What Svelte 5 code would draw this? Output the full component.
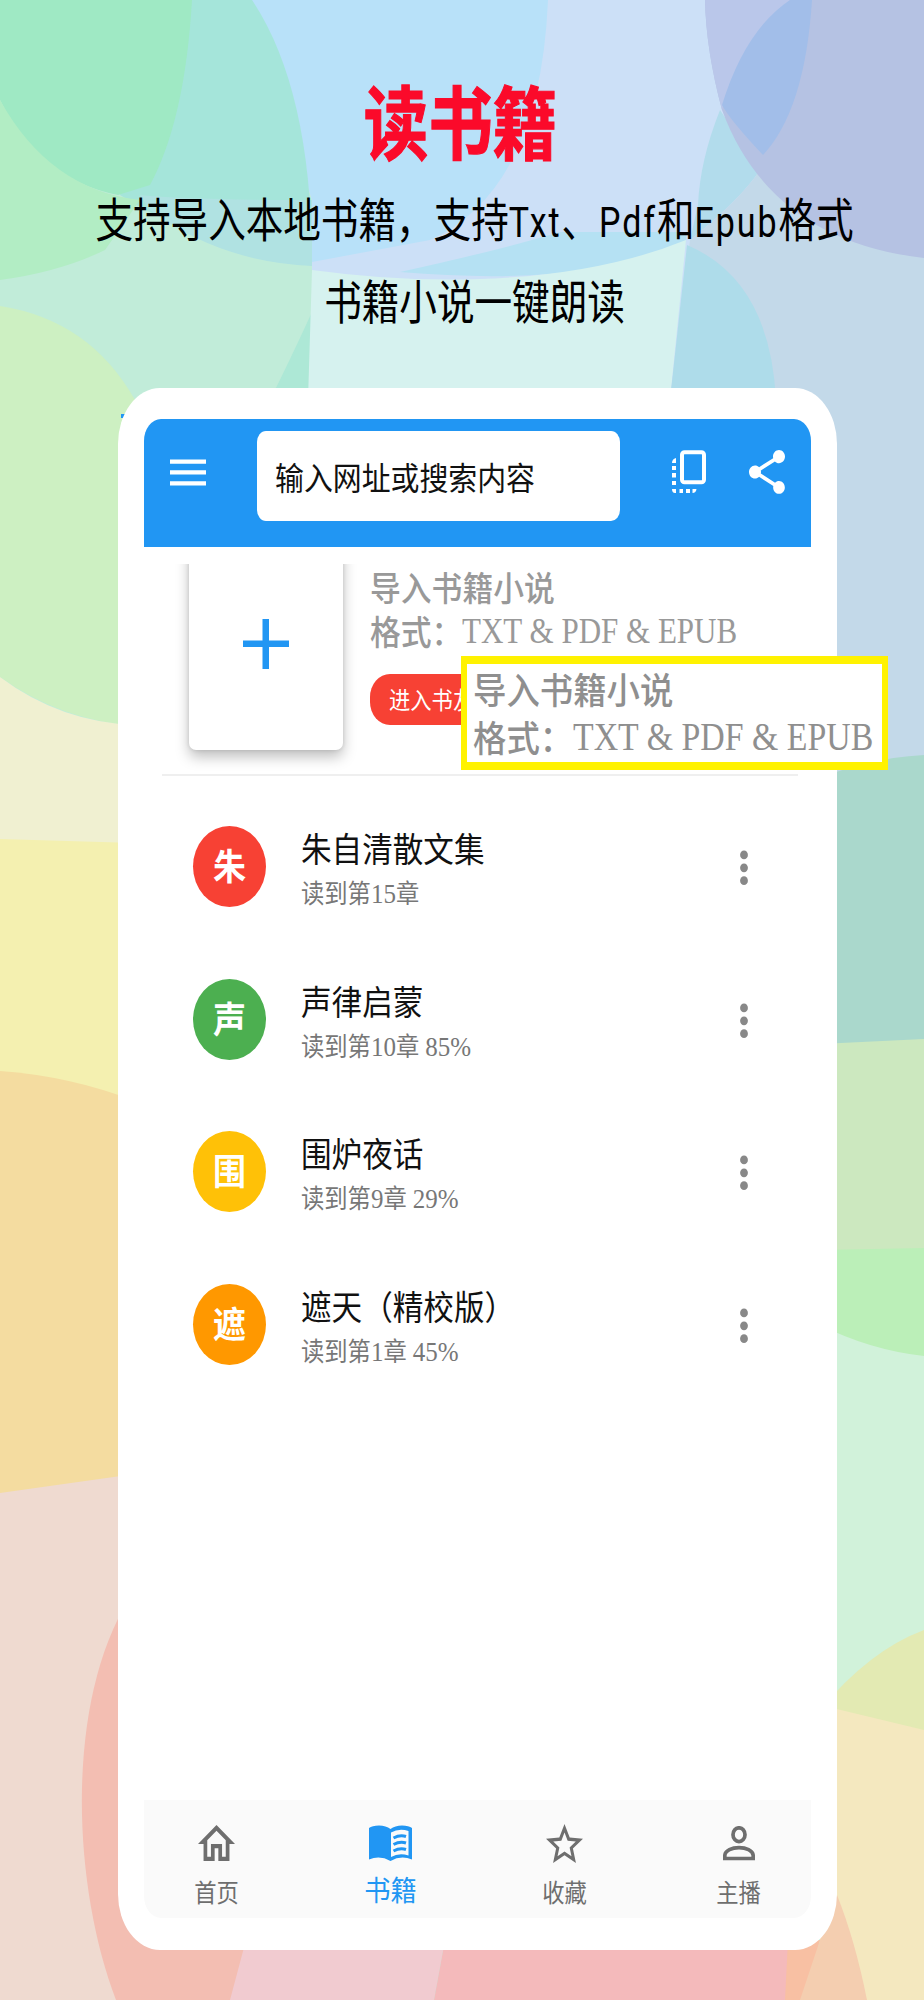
<script>
	let books = [
		{ initial: '朱', title: '朱自清散文集', chapter: '15', progress: '', color: '#f74134' },
		{ initial: '声', title: '声律启蒙', chapter: '10', progress: '85%', color: '#4caf50' },
		{ initial: '围', title: '围炉夜话', chapter: '9', progress: '29%', color: '#ffc107' },
		{ initial: '遮', title: '遮天（精校版）', chapter: '1', progress: '45%', color: '#ff9800' }
	];
	let tabs = [
		{ id: 'home', label: '首页' },
		{ id: 'books', label: '书籍' },
		{ id: 'star', label: '收藏' },
		{ id: 'host', label: '主播' }
	];
	let current = 'books';
</script>

<div class="poster">
	<svg class="backdrop" width="924" height="2000" viewBox="0 0 924 2000" aria-hidden="true">
		<rect width="924" height="2000" fill="#c1ecd9" />
		<!-- top -->
		<path d="M250 0H924V400H312V200Z" fill="#cce0f7" />
		<path d="M250 0H548Q540 190 430 240L312 262V200Z" fill="#b8e1f9" />
		<path d="M190 0H252Q312 90 312 265Q190 240 120 195Z" fill="#a5e5da" />
		<path d="M0 0H192Q185 120 150 185L118 195Q40 180 0 100Z" fill="#9fe9c4" />
		<path d="M0 100Q50 190 140 200L105 250Q60 272 0 280Z" fill="#b2edc4" />
		<path d="M312 312Q290 360 270 400H312Z" fill="#ade8d6" />
		<path d="M400 272Q500 250 560 232H686V242Q590 288 400 272Z" fill="#b5e1f3" />
		<path d="M312 270Q400 282 480 279Q600 275 686 240L670 400H308Z" fill="#d6f2ef" />
		<path d="M140 195Q190 200 312 200V266Q220 262 150 210Z" fill="#b0e2e2" />
		<path d="M720 110Q700 160 698 205L690 240Q740 200 760 170Z" fill="#b2dcec" />
		<path d="M690 240Q740 200 760 170L924 150V780H780L700 400H670Z" fill="#c3d9e9" />
		<path d="M687 245Q770 280 776 400H670Z" fill="#aedcea" />
		<path d="M705 0H924V258Q770 240 722 110Q706 50 705 0Z" fill="#b5c2e3" />
		<path d="M705 0H790Q735 50 722 110Q706 50 705 0Z" fill="#bac7ea" />
		<path d="M790 0H812Q805 110 763 155Q730 120 722 105Q745 30 790 0Z" fill="#a2bee9" />
		<!-- left side -->
		<path d="M0 306Q90 320 135 400V726Q60 720 0 677Z" fill="#cdf0c2" />
		<path d="M0 677Q60 722 135 725V845H0Z" fill="#f0f0d1" />
		<path d="M0 839L135 843V1102H0Z" fill="#f4f0b0" />
		<path d="M0 1071Q70 1076 135 1101V1480L0 1498Z" fill="#f4dca0" />
		<path d="M0 1493L135 1474V2000H0Z" fill="#efdad0" />
		<path d="M135 1590C65 1690 70 1880 116 2000H260V1800Z" fill="#f3beb2" />
		<!-- right side -->
		<path d="M820 778Q870 758 924 755V1050H820Z" fill="#aad8cc" />
		<path d="M820 1044L924 1039V1260H820Z" fill="#cce8bf" />
		<path d="M820 1250L924 1248V1365H820Z" fill="#bbefb8" />
		<path d="M820 1325Q870 1350 924 1356V1740H820Z" fill="#d1f2da" />
		<path d="M820 1710Q870 1650 924 1630V1740H820Z" fill="#e3eab3" />
		<path d="M820 1705L924 1730V2000H820Z" fill="#f4e8bf" />
		<!-- bottom edge -->
		<path d="M246 1940H445L434 2000H230Z" fill="#f1cbd0" />
		<path d="M445 1940H790V2000H434Z" fill="#f4babb" />
		<path d="M788 1940H820L805 2000H785Z" fill="#f8c0a3" />
		<path d="M837 1895Q855 1940 867 2000H800L820 1940Z" fill="#f4ceb0" />
		<path d="M121 414h4v4h-4z" fill="#2196f3" />
	</svg>

	<header class="intro">
		<h1 class="tall">读书籍</h1>
		<p class="tall">支持导入本地书籍，支持<span class="latin">Txt</span>、<span class="latin">Pdf</span>和<span class="latin">Epub</span>格式</p>
		<p class="tall second">书籍小说一键朗读</p>
	</header>

	<main class="phone">
		<div class="screen">
			<div class="toolbar">
				<svg class="menu" width="36" height="27" viewBox="0 0 36 27">
					<path d="M0 .5H36V4.700H0ZM0 11.300H36V15.500H0ZM0 22.200H36V26.400H0Z" fill="#fff" />
				</svg>
				<div class="search"><span class="t">输入网址或搜索内容</span></div>
				<svg class="front" width="34" height="44" viewBox="0 0 34 44">
					<rect x="10" y="2.2" width="22" height="30" rx="2.5" fill="none" stroke="#fff" stroke-width="4" />
					<path d="M4 8V13H0Q0 9 4 8ZM0 16H4V20H0ZM0 23H4V27.500H0ZM0 31H4V35H0ZM0 39H4V43H3Q0 43 0 39ZM7.500 39H11V43H7.500ZM14 39H18V43H14ZM20.500 39H24.500Q24 43 20.500 43Z" fill="#fff" />
				</svg>
				<svg class="share" width="36" height="44" viewBox="3 2 18 20" preserveAspectRatio="none">
					<path fill="#fff" d="M18 16.080c-.76 0-1.440.3-1.960.77L8.910 12.700c.05-.23.09-.46.09-.7s-.04-.47-.09-.7l7.050-4.110c.54.5 1.250.81 2.040.81 1.660 0 3-1.340 3-3s-1.340-3-3-3-3 1.340-3 3c0 .24.04.47.09.7L8.040 9.810C7.500 9.310 6.790 9 6 9c-1.660 0-3 1.340-3 3s1.340 3 3 3c.79 0 1.500-.31 2.040-.81l7.120 4.160c-.05.21-.08.43-.08.65 0 1.610 1.310 2.920 2.920 2.920s2.920-1.310 2.920-2.920-1.310-2.920-2.920-2.920z" />
				</svg>
			</div>

			<section class="import">
				<div class="cover-clip">
					<button class="cover" aria-label="导入">
						<svg width="46" height="50" viewBox="0 0 46 50">
							<path d="M19.500 0H26V21.500H46V28H26V50H19.500V28H0V21.500H19.500Z" fill="#2196f3" />
						</svg>
					</button>
				</div>
				<div class="import-text">
					<div class="line"><span class="t">导入书籍小说</span></div>
					<div class="line"><span class="t">格式：</span><span class="t serif">TXT &amp; PDF &amp; EPUB</span></div>
					<button class="enter"><span class="t">进入书友</span></button>
				</div>
				<div class="callout">
					<div class="line"><span class="t">导入书籍小说</span></div>
					<div class="line"><span class="t">格式：</span><span class="t serif">TXT &amp; PDF &amp; EPUB</span></div>
				</div>
			</section>

			<ul class="books">
				{#each books as book}
					<li>
						<div class="avatar" style="background: {book.color}"><span class="t">{book.initial}</span></div>
						<div class="info">
							<div class="title"><span class="t">{book.title}</span></div>
							<div class="read">
								<span class="t">读到第<span class="num">{book.chapter}</span>章{#if book.progress}<span class="num pct">{book.progress}</span>{/if}</span>
							</div>
						</div>
						<svg class="more" width="8" height="36" viewBox="0 0 8 36">
							<ellipse cx="4" cy="4.900" rx="3.900" ry="4.400" />
							<ellipse cx="4" cy="17.800" rx="3.900" ry="4.400" />
							<ellipse cx="4" cy="30.700" rx="3.900" ry="4.400" />
						</svg>
					</li>
				{/each}
			</ul>

			<nav>
				{#each tabs as tab}
					<button class="tab" class:active={tab.id === current} on:click={() => (current = tab.id)}>
						<span class="icon">
							{#if tab.id === 'home'}
								<svg width="37" height="36" viewBox="2 3 20 17" preserveAspectRatio="none">
									<path d="M12 5.690l5 4.500V18h-2v-6H9v6H7v-7.810l5-4.500M12 3L2 12h3v8h6v-6h2v6h6v-8h3L12 3z" />
								</svg>
							{:else if tab.id === 'books'}
								<svg width="43" height="36" viewBox="0 0 43 36">
									<path fill-rule="evenodd" d="M0 3Q3 .5 10 .5Q17 .5 21.500 4Q26 .5 33 .5Q40 .5 43 3V34.500Q32 30 21.500 36Q11 30 0 34.500ZM22 7.500V32Q30 27.500 39.500 30.500V6Q30 3 22 7.500Z" />
									<path d="M24.500 13Q31 9.500 37 11.500M24.500 19.500Q31 16 37 18M24.500 26Q31 22.500 37 24.500" fill="none" stroke="currentColor" stroke-width="3" />
								</svg>
							{:else if tab.id === 'star'}
								<svg width="37" height="39" viewBox="2 2 20 19" preserveAspectRatio="none">
									<path d="M22 9.240l-7.190-.62L12 2 9.190 8.630 2 9.240l5.460 4.730L5.820 21 12 17.270 18.180 21l-1.630-7.030L22 9.240zM12 15.400l-3.760 2.270 1-4.280-3.320-2.880 4.380-.38L12 6.100l1.710 4.040 4.380.38-3.320 2.880 1 4.280L12 15.400z" />
								</svg>
							{:else}
								<svg width="32" height="35" viewBox="0 0 32 35">
									<g fill="none" stroke="currentColor" stroke-width="3.700">
										<ellipse cx="16" cy="8.700" rx="6" ry="6.900" />
										<path d="M1.800 32.500V29.500C2.500 19 29.500 19 30.200 29.500V32.500Z" />
									</g>
								</svg>
							{/if}
						</span>
						<span class="t label">{tab.label}</span>
					</button>
				{/each}
			</nav>
		</div>
	</main>
</div>

<style>
	:global(body) {
		margin: 0;
	}
	.poster {
		position: relative;
		width: 924px;
		height: 2000px;
		overflow: hidden;
		font-family: 'Noto Sans CJK SC', sans-serif;
	}
	.backdrop {
		position: absolute;
		inset: 0;
	}
	.intro {
		position: relative;
		height: 388px;
		box-sizing: border-box;
		padding-top: 78px;
		text-align: center;
		white-space: nowrap;
	}
	h1, p, ul {
		margin: 0;
		padding: 0;
	}
	/* everything is drawn a little taller than wide */
	.tall {
		transform: scaleY(1.24);
	}
	.t {
		display: inline-block;
		transform: scaleY(1.1);
		white-space: nowrap;
	}
	h1 {
		width: 921px;
		font-size: 64.5px;
		line-height: 80px;
		font-weight: 700;
		color: #fb0a2a;
		-webkit-text-stroke: 1px #fb0a2a;
	}
	p {
		width: 949px;
		margin-top: 35px;
		font-size: 37.6px;
		line-height: 50px;
		color: #000;
	}
	p.second {
		margin-top: 27px;
	}
	.latin {
		font-family: Roboto, sans-serif;
		font-size: 34px;
		letter-spacing: 1.9px;
	}
	.phone {
		position: relative;
		width: 719px;
		height: 1562px;
		box-sizing: border-box;
		margin-left: 118px;
		padding: 31px 26px 32px;
		border-radius: 42px / 56px;
		background: #fff;
	}
	.screen {
		display: flex;
		flex-direction: column;
		height: 100%;
	}
	.toolbar {
		display: flex;
		height: 128px;
		flex: none;
		background: #2196f3;
		border-radius: 17px 17px 0 0 / 22px 22px 0 0;
	}
	.menu {
		margin: 40px 0 0 26px;
	}
	.search {
		width: 363px;
		height: 90px;
		margin: 12px 0 0 51px;
		box-sizing: border-box;
		padding-left: 18px;
		border-radius: 9px / 11px;
		background: #fff;
		font-size: 28.9px;
		line-height: 90px;
		color: #111;
	}
	.front {
		margin: 31px 0 0 52px;
	}
	.share {
		margin: 31px 0 0 43px;
	}
	.import {
		position: relative;
		display: flex;
		height: 210px;
		flex: none;
		margin: 17px 13px 0 18px;
		border-bottom: 2px solid #efefef;
		color: #999;
	}
	.cover-clip {
		width: 204px;
		padding: 0 0 0 27px;
		box-sizing: border-box;
		overflow: hidden;
		flex: none;
	}
	.cover {
		display: flex;
		width: 154px;
		height: 206px;
		margin-top: -20px;
		padding: 0 0 6px;
		box-sizing: border-box;
		align-items: center;
		justify-content: center;
		border: 0;
		border-radius: 7px;
		background: #fff;
		box-shadow: 0 7px 14px rgba(0, 0, 0, .25), 0 0 4px rgba(0, 0, 0, .12);
	}
	.import-text {
		margin: 1px 0 0 4px;
		font-size: 30.8px;
		font-weight: 500;
	}
	.line {
		display: flex;
		height: 44px;
		line-height: 44px;
	}
	.serif {
		font-family: 'Liberation Serif', serif;
		font-size: 33px;
		font-weight: 400;
		transform: scale(.94, 1.1);
		transform-origin: left center;
	}
	.enter {
		display: block;
		width: 150px;
		height: 51px;
		margin-top: 21px;
		padding: 0 0 2px 19px;
		border: 0;
		border-radius: 20px / 23px;
		background: #f74134;
		color: #fff;
		font: 21.3px 'Noto Sans CJK SC', sans-serif;
		text-align: left;
	}
	.callout {
		position: absolute;
		left: 299px;
		top: 92px;
		width: 427px;
		height: 114px;
		box-sizing: border-box;
		padding: 1px 0 0 6px;
		border: solid #fff200;
		border-width: 8px 6px;
		background: #fff;
		font-size: 33.4px;
		font-weight: 500;
		color: #8f8f8f;
	}
	.callout .line {
		height: 48px;
		line-height: 48px;
	}
	.callout .serif {
		font-size: 36px;
	}
	.books {
		flex: 1;
		padding-top: 50px;
		list-style: none;
	}
	.books li {
		display: flex;
		height: 152.5px;
		padding-left: 49px;
	}
	.avatar {
		width: 73px;
		height: 81px;
		border-radius: 50%;
		color: #fff;
		font-size: 33px;
		font-weight: 700;
		line-height: 79px;
		text-align: center;
	}
	.info {
		width: 439px;
		margin: -2px 0 0 35px;
	}
	.title {
		height: 48px;
		line-height: 48px;
		font-size: 30.6px;
		color: #111;
	}
	.read {
		height: 40px;
		line-height: 40px;
		font-size: 23.3px;
		color: #777;
	}
	.num {
		font-family: 'Liberation Serif', serif;
		font-size: 25px;
	}
	.pct {
		margin-left: 6px;
	}
	.more {
		margin-top: 24px;
		fill: #888;
	}
	nav {
		display: flex;
		justify-content: center;
		height: 118px;
		flex: none;
		background: #fafafa;
		border-radius: 0 0 17px 17px / 0 0 22px 22px;
	}
	.tab {
		display: flex;
		flex: none;
		flex-direction: column;
		align-items: center;
		width: 174px;
		padding: 0;
		border: 0;
		background: none;
		color: #6e6e6e;
		font: 22.3px/32px 'Noto Sans CJK SC', sans-serif;
	}
	.tab.active {
		color: #2196f3;
		font-size: 26.3px;
	}
	.icon {
		display: flex;
		height: 40px;
		margin-top: 23px;
		align-items: center;
	}
	.icon svg {
		fill: currentColor;
	}
	.label {
		margin-top: 12px;
	}
	.active .label {
		margin-top: 10px;
	}
</style>
